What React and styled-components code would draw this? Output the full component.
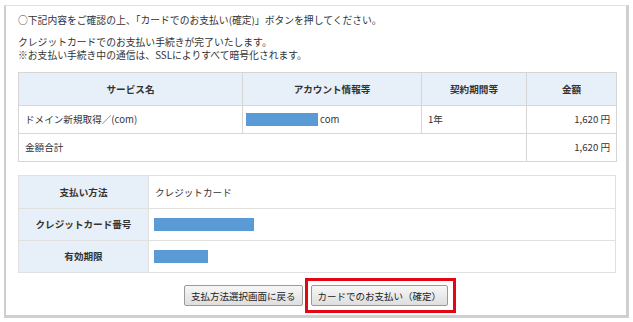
import React from "react";
import styled, { createGlobalStyle } from "styled-components";

const GlobalStyle = createGlobalStyle`
  body {
    margin: 0;
    background: #fff;
    font-family: "Noto Sans CJK JP", "Noto Sans", sans-serif;
    color: #333;
  }
`;

const Frame = styled.div`
  box-sizing: border-box;
  margin: 5px 0 0 4px;
  width: 625px;
  height: 313px;
  border-top: 1px solid #e2e2e2;
  border-left: 2px solid #cfcfcf;
  border-right: 3px solid #cfcfcf;
  border-bottom: 3px solid #cfcfcf;
  padding: 8px 10px 0 12px;
  font-size: 9.5px;
  line-height: 13px;
`;

const Message = styled.p`
  margin: 0 0 ${p => p.gap || 0}px;
  font-size: 9.8px;
  white-space: nowrap;
`;

const Table = styled.table`
  width: 598px;
  border-collapse: collapse;
  table-layout: fixed;
  margin-bottom: ${p => p.gap || 0}px;
  font-size: 9.6px;

  th,
  td {
    border: 1px solid ${p => p.line || "#d6d6d6"};
    padding: 0 6px;
    white-space: nowrap;
  }
`;

const Head = styled.th`
  height: ${p => p.h || 32}px;
  background: #e7eff8;
  font-weight: bold;
  text-align: center;
  color: #333;
`;

const Cell = styled.td`
  height: ${p => p.h || 27}px;
  text-align: ${p => (p.right ? "right" : "left")};
  background: #fff;
`;

const Mask = styled.span`
  display: inline-block;
  vertical-align: middle;
  width: ${p => p.w}px;
  height: 13px;
  background: #5b9bd5;
  margin: ${p => (p.flush ? "0 2px 0 -3px" : "0 0 0 -1px")};
`;

const Actions = styled.div`
  display: flex;
  justify-content: center;
  align-items: center;
  gap: 2px;
  padding: 5px 0 0 6px;
`;

const Highlight = styled.span`
  display: inline-flex;
  border: 3px solid #e30613;
  padding: 4px 5px 4px 3px;
`;

const Button = styled.button`
  height: 21px;
  padding: 0 6px;
  border: 1px solid #9a9a9a;
  border-radius: 2px;
  background: linear-gradient(#f7f7f7, #dedede);
  font-family: "Noto Sans CJK JP", "Noto Sans", sans-serif;
  font-size: 9.5px;
  color: #222;
  white-space: nowrap;
`;

export default function App() {
  return (
    <>
      <GlobalStyle />
      <Frame>
        <Message gap={9}>
          ○下記内容をご確認の上、「カードでのお支払い(確定)」ボタンを押してください。
        </Message>
        <Message>クレジットカードでのお支払い手続きが完了いたします。</Message>
        <Message gap={10}>
          ※お支払い手続き中の通信は、SSLによりすべて暗号化されます。
        </Message>

        <Table gap={13}>
          <colgroup>
            <col style={{ width: 224 }} />
            <col style={{ width: 179 }} />
            <col style={{ width: 105 }} />
            <col style={{ width: 90 }} />
          </colgroup>
          <thead>
            <tr>
              <Head>サービス名</Head>
              <Head>アカウント情報等</Head>
              <Head>契約期間等</Head>
              <Head>金額</Head>
            </tr>
          </thead>
          <tbody>
            <tr>
              <Cell>ドメイン新規取得／(com)</Cell>
              <Cell>
                <Mask w={72} flush />
                com
              </Cell>
              <Cell>1年</Cell>
              <Cell right>1,620 円</Cell>
            </tr>
            <tr>
              <Cell colSpan={3}>金額合計</Cell>
              <Cell right>1,620 円</Cell>
            </tr>
          </tbody>
        </Table>

        <Table line="#e0e0e0">
          <colgroup>
            <col style={{ width: 130 }} />
            <col />
          </colgroup>
          <tbody>
            <tr>
              <Head h={32}>支払い方法</Head>
              <Cell h={32}>クレジットカード</Cell>
            </tr>
            <tr>
              <Head h={31}>クレジットカード番号</Head>
              <Cell h={31}>
                <Mask w={100} />
              </Cell>
            </tr>
            <tr>
              <Head h={31}>有効期限</Head>
              <Cell h={31}>
                <Mask w={54} />
              </Cell>
            </tr>
          </tbody>
        </Table>

        <Actions>
          <Button>支払方法選択画面に戻る</Button>
          <Highlight>
            <Button>カードでのお支払い（確定）</Button>
          </Highlight>
        </Actions>
      </Frame>
    </>
  );
}
